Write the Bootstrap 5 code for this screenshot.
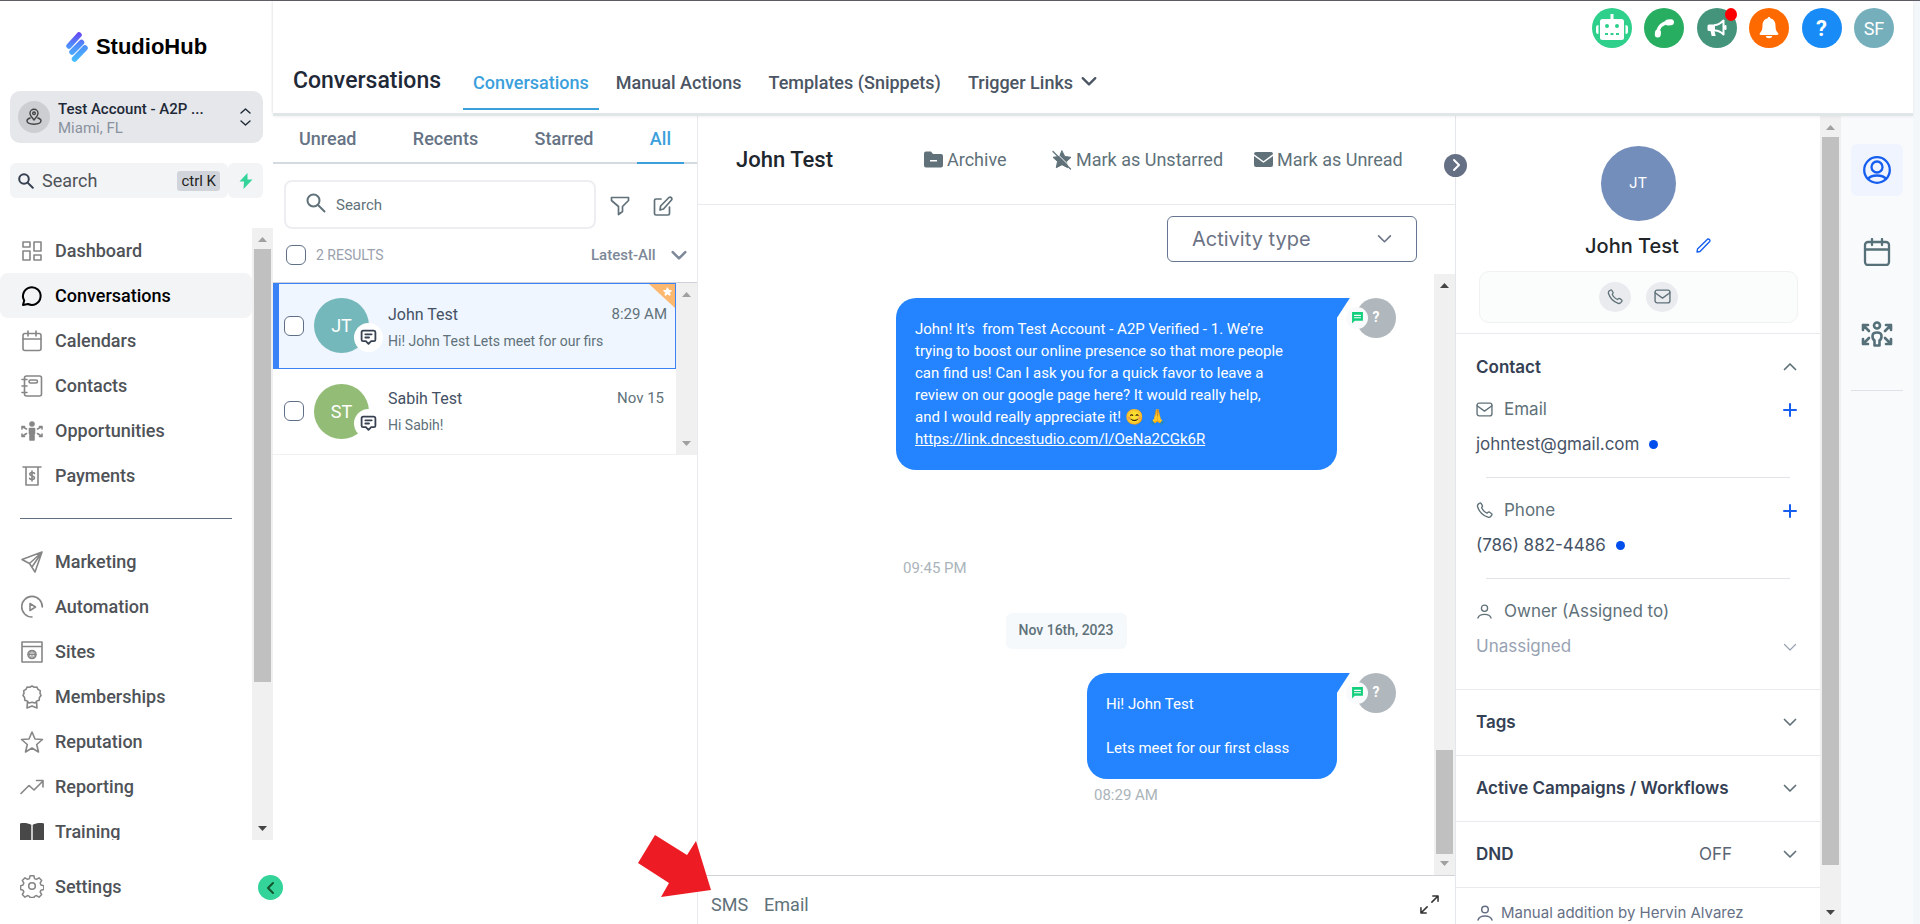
<!DOCTYPE html>
<html lang="en">
<head>
<meta charset="utf-8">
<meta name="viewport" content="width=device-width, initial-scale=1">
<title>StudioHub - Conversations</title>
<link href="https://cdn.jsdelivr.net/npm/bootstrap@5.3.0/dist/css/bootstrap.min.css" rel="stylesheet">
<style>
  body { font-family: Roboto, "Liberation Sans", sans-serif; font-size: 16px; color: #607179; background: #fff; overflow: hidden; stroke-width: 2; }
  svg { display: block; flex: none; fill: none; stroke: currentColor; stroke-linecap: round; stroke-linejoin: round; }
  svg.solid { fill: currentColor; stroke: none; }
  a { color: inherit; text-decoration: none; }
  button { font: inherit; color: inherit; border: 0; background: none; padding: 0; }
  select, input { font: inherit; color: inherit; border: 0; background: none; outline: 0; min-width: 0; }
  select { appearance: none; }
  input::placeholder { color: inherit; opacity: 1; }
  .app-shell { border-top: 1px solid #5f5e66; }
  .t14 { font-size: 14px; } .t15 { font-size: 15px; } .t16 { font-size: 16px; } .t18 { font-size: 18px; }
  .font-inter { font-family: Inter, "Liberation Sans", sans-serif; }
  .disc { border-radius: 50%; display: flex; align-items: center; justify-content: center; flex: none; color: #fff; }

  /* drawn scrollbars */
  .scroller { width: 21px; flex: none; background: #f0f0f0; display: flex; flex-direction: column; align-items: center; color: #a0a0a0; }
  .scroller svg { width: 21px; height: 21px; fill: currentColor; stroke: none; }
  .scroller .dark { color: #454545; }
  .scroller .rail { flex: 1; width: 17px; display: flex; flex-direction: column; min-height: 0; }
  .scroller .thumb { background: #c0c0c0; }

  /* sidebar */
  .sidebar { width: 273px; flex: none; position: relative; color: #4f5358; }
  .brand { height: 90px; flex: none; color: #000; font: 700 22px "Liberation Sans", sans-serif; padding-top: 2px; }
  .account { height: 52px; border-radius: 10px; background: #e5e7eb; color: #1f2937; line-height: 19px; width: 253px; flex: none; }
  .account .disc { width: 32px; height: 32px; background: #cdced1; color: #444; }
  .quick-row { width: 253px; margin-top: 20px; flex: none; }
  .quick { height: 35px; border-radius: 6px; background: #f3f4f6; }
  .keycap { background: #d1d5db; border-radius: 3px; height: 20px; line-height: 20px; color: #222; font-size: 15px; }
  .side-link { height: 45px; padding-left: 20px; gap: 11px; font-size: 18px; font-weight: 500; flex: none; }
  .side-link svg { width: 24px; height: 24px; color: #868686; stroke-width: 1.6; }
  .side-link.current { background: #f3f4f6; color: #000; border-radius: 8px; }
  .side-link.current svg { color: #000; stroke-width: 2; }
  .side-rule { height: 1px; background: #607080; margin: 20px; flex: none; }
  .side-foot { height: 84px; flex: none; }
  .fold { position: absolute; right: -10px; bottom: 24px; width: 25px; height: 25px; background: #34d399; color: #14532d; z-index: 5; }

  /* header */
  .topbar { height: 112px; background: #fff; box-shadow: 0 3px 0 #e0e5e8, 0 4px 3px rgba(0,0,0,.06), -1px 0 2px rgba(0,0,0,.08); position: relative; z-index: 2; }
  .topbar h1 { font-size: 23px; font-weight: 500; color: #1f2937; padding: 0 0 18px 20px; width: 190px; line-height: 28px; }
  .top-tabs { gap: 7px; padding-bottom: 3px; }
  .top-tab { padding: 3px 10px 0; height: 44px; font-size: 18px; font-weight: 500; color: #4b5563; }
  .top-tab.current { color: #3b9fdc; border-bottom: 2px solid #3b9fdc; }
  .actions { width: 302px; top: 7px; right: 19px; }
  .actions .disc { width: 40px; height: 40px; position: relative; }
  .alert-dot { position: absolute; width: 12px; height: 13px; border-radius: 50%; background: #f00; top: 0; right: 0; }
  .stage { margin-top: 3px; }
  .window-edge { background: #f3f7fa; padding-right: 7px; }

  /* conversation list */
  .threads { width: 425px; flex: none; border-right: 1px solid #e8eaee; }
  .filters { height: 48px; border-bottom: 2px solid #d5dae0; padding: 0 13px; }
  .filters a { padding: 0 13px; font-size: 18px; font-weight: 500; color: #667385; margin-bottom: -2px; height: 48px; padding-top: 10px; line-height: 26px; }
  .filters a.current { color: #3b9fdc; border-bottom: 2px solid #3b9fdc; }
  .thread-search { height: 49px; border: 2px solid #eceef2; border-radius: 8px; width: 312px; padding: 2px 0 0 20px; gap: 10px; }
  .results { height: 54px; border-bottom: 1px solid #cfd3d9; padding: 0 10px 0 13px; }
  .tick { appearance: none; width: 20px; height: 20px; border: 1px solid #5f6f86; border-radius: 6px; background: #fff; margin: 0; flex: none; }
  .thread { height: 86px; padding-left: 11px; position: relative; }
  .thread.current { background: #eff6ff; border: 1px solid #3b82f6; border-left-width: 6px; padding-left: 5px; }
  .thread .face { width: 55px; height: 55px; margin: 0 19px 0 10px; font-size: 18px; position: relative; }
  .thread .via { position: absolute; width: 29px; height: 29px; right: -14px; bottom: 1px; background: #fff; color: #374151; }
  .thread .corner { position: absolute; right: 0; top: 0; width: 26px; height: 24px; }
  .peek { white-space: nowrap; font-size: 14px; }

  /* chat */
  .chat-head { height: 89px; border-bottom: 1px solid #e8eaee; padding-left: 38px; position: relative; }
  .chat-head h2 { font-size: 22px; font-weight: 500; color: #20262e; width: 188px; }
  .chat-head button { gap: 4px; font-size: 18px; }
  .next { position: absolute; right: -12px; top: 38px; width: 23px; height: 23px; background: #667085; z-index: 3; }
  .activity { width: 250px; height: 46px; border: 1px solid #667590; border-radius: 6px; font-size: 20px; color: #6b7385; }
  .stream { padding: 24px 38px 0 0; overflow: hidden; }
  .bubble { background: #2484ff; color: #fff; border-radius: 20px 0 20px 20px; padding: 20px 19px; line-height: 22px; font-size: 15px; position: relative; }
  .bubble::after { content: ""; position: absolute; left: 100%; top: 0; width: 13px; height: 20px; background: inherit; clip-path: polygon(0 0, 100% 0, 0 100%); }
  .bubble-wide { width: 441px; } .bubble-slim { width: 250px; }
  .sender { width: 40px; height: 40px; background: #b0b8bd; margin-left: 19px; font-size: 14px; font-weight: 700; position: relative; }
  .sender .via { position: absolute; left: -10px; width: 22px; height: 22px; background: #f8fafc; color: #12cf7d; }
  .stamp { line-height: 20px; padding-left: 7px; color: #aab4ba; font-size: 15px; }
  .day { height: 36px; border-radius: 6px; background: #f5f9fc; font-size: 14px; font-weight: 500; padding: 0 13px; }
  .composer { height: 49px; border-top: 1px solid #d0d4d9; padding: 9px 16px 0 13px; font-size: 18px; }
  .pointer-arrow { position: absolute; left: -61px; bottom: 26px; z-index: 4; }

  /* contact panel */
  .contact { width: 386px; flex: none; }
  .contact-body { overflow: hidden; border-left: 1px solid #e3e6ea; }
  .contact-body > section { border-bottom: 1px solid #e8eaed; }
  .portrait { width: 75px; height: 75px; background: #748ebc; font-size: 15px; }
  .full-name { height: 30px; margin-top: 10px; gap: 17px; padding-left: 20px; }
  .reach { height: 52px; border: 1px solid #f0f2f2; border-radius: 10px; background: #fbfdfd; gap: 15px; margin: 10px 22px 0 23px; }
  .reach .disc { width: 32px; height: 30px; background: #eaebef; color: #5f7179; }
  .line26 { height: 26px; }
  .fact { padding: 0 23px 0 20px; font-size: 17px; }
  .fact h3 { font-size: 17px; font-weight: 600; color: #344054; }
  .fact hr { margin: 19px 7px 20px 10px; border: 0; border-top: 1px solid #e0e3e7; opacity: 1; }
  .dot { width: 9px; height: 9px; border-radius: 50%; background: #004eeb; }
  .fold-row { height: 66px; }
  .tool-rail { width: 72px; flex: none; background: #f9fafc; color: #56707a; padding: 28px 10px; gap: 30px; }
  .tool { width: 52px; height: 52px; border-radius: 6px; display: flex; align-items: center; justify-content: center; }
  .tool.current { background: #eff4ff; color: #155eef; }
</style>
</head>
<body>
<svg width="0" height="0" class="position-absolute" aria-hidden="true">
  <symbol id="tri-up" viewBox="0 0 21 21"><path d="M6 14h9l-4.500-5z"/></symbol>
  <symbol id="tri-down" viewBox="0 0 21 21"><path d="M6 7h9l-4.500 5z"/></symbol>
  <symbol id="mag" viewBox="0 0 20 20"><circle cx="7.500" cy="7.500" r="6"/><path d="M12 12l6.500 6.500"/></symbol>
  <symbol id="down" viewBox="0 0 14 14"><path d="M1.500 4.500L7 10l5.500-5.500"/></symbol>
  <symbol id="mail" viewBox="0 0 16 16"><rect x="1" y="2" width="14" height="12" rx="2"/><path d="M1 4.500l7 5 7-5"/></symbol>
  <symbol id="phone" viewBox="0 0 16 16"><path d="M5.300 5.400c.5 1.100 1.200 2.100 2.100 3s1.900 1.600 3 2.100l.9-.8c.5-.4 1-.4 1.500-.1l1.700 1.200c.6.400.7 1 .3 1.500l-.8 1.100c-.7.9-1.700 1.300-2.800.9C6.500 12.700 3 9.200 1.500 4.500c-.3-1 0-2 .9-2.700l.9-.6c.6-.4 1.200-.3 1.600.3l1 1.600c.3.500.3 1-.1 1.500z"/></symbol>
  <symbol id="person" viewBox="0 0 16 16"><circle cx="8" cy="4.500" r="3.300"/><path d="M1 15c1-3 3.500-4 7-4s6 1 7 4"/></symbol>
  <symbol id="note" viewBox="0 0 16 16"><path d="M3 1.500h10q1.500 0 1.500 1.500v7q0 1.500-1.500 1.500h-2.500L8 14l-2.500-2.500H3Q1.500 11.500 1.500 10V3Q1.500 1.500 3 1.500zM5 5h6M5 8h3.500"/></symbol>
  <symbol id="msg" viewBox="0 0 12 12"><path fill="currentColor" stroke="none" d="M1 1h10v8H3.500L1 11.500z"/><path stroke="#fff" stroke-width="1" d="M3.200 4h5.600M3.200 6.200h5.600"/></symbol>
</svg>

<div class="app-shell d-flex vh-100">
  <aside class="sidebar d-flex flex-column">
    <div class="brand d-flex align-items-center justify-content-center gap-2">
      <svg width="22" height="32" viewBox="0 0 22 32">
        <defs><linearGradient id="lg" gradientUnits="userSpaceOnUse" x1="0" y1="0" x2="0" y2="32"><stop offset="0" stop-color="#6a3df0"/><stop offset=".45" stop-color="#4f8dfb"/><stop offset="1" stop-color="#45c3ff"/></linearGradient></defs>
        <path stroke="url(#lg)" stroke-width="5.500" d="M3 15L13 4M6 21L15.500 11.500M8.500 28L19 17"/>
      </svg>
      <span>StudioHub</span>
    </div>
    <button type="button" class="account d-flex align-items-center text-start mx-auto px-2">
      <span class="disc"><svg width="18" height="18" viewBox="0 0 18 18" stroke-width="1.400"><path d="M9 12C6.500 9 5 7.500 5 5.300a4 4 0 0 1 8 0C13 7.500 11.500 9 9 12z"/><circle cx="9" cy="5.300" r="1.300"/><path d="M5.200 10C3.500 10.500 2 11.300 2 12.800c0 2 3 3.400 7 3.400s7-1.400 7-3.400c0-1.500-1.500-2.300-3.200-2.800"/></svg></span>
      <span class="ms-2 pt-1 flex-fill"><span class="d-block t15 fw-medium">Test Account - A2P ...</span><span class="d-block t15" style="color:#8a929e">Miami, FL</span></span>
      <svg width="20" height="20" viewBox="0 0 20 20" stroke-width="1.400"><path d="M6 6l4.500-4L15 6M6 14l4.500 4 4.500-4"/></svg>
    </button>
    <div class="quick-row d-flex mx-auto">
      <label class="quick d-flex align-items-center flex-fill px-2">
        <svg width="16" height="16" viewBox="0 0 20 20" stroke-width="2.500" style="color:#374151"><use href="#mag"/></svg>
        <input type="text" class="t18 flex-fill ms-2 p-0" placeholder="Search" aria-label="Search" size="6">
        <span class="keycap px-1">ctrl K</span>
      </label>
      <button type="button" class="quick px-2" aria-label="Quick actions" style="width:35px"><svg class="solid mx-auto" width="14" height="16" viewBox="0 0 14 16" style="color:#34d399"><path d="M8.500 0L0.500 8.500h4.500L4.500 16 13.500 6.500H8.500z"/></svg></button>
    </div>
    <div class="d-flex flex-fill overflow-hidden" style="margin-top:30px">
      <nav class="d-flex flex-column flex-fill overflow-hidden">
        <a href="#" class="side-link d-flex align-items-center"><svg viewBox="0 0 24 24"><path d="M3 3h7v5H3zM14 3h7v9h-7zM3 12h7v9H3zM14 16h7v5h-7z"/></svg>Dashboard</a>
        <a href="#" class="side-link current d-flex align-items-center"><svg viewBox="0 0 24 24"><path d="M3 21l1.200-4.500A8.800 8.800 0 1 1 8 20z"/></svg>Conversations</a>
        <a href="#" class="side-link d-flex align-items-center"><svg viewBox="0 0 24 24"><rect x="3" y="4.500" width="18" height="17" rx="2"/><path d="M3 10h18M8 2v5M16 2v5"/></svg>Calendars</a>
        <a href="#" class="side-link d-flex align-items-center"><svg viewBox="0 0 24 24"><rect x="4.500" y="2" width="17" height="20" rx="2"/><rect x="9" y="6" width="8.500" height="3" rx="1.500"/><path d="M2 5.500h5M2 12h5M2 18.500h5"/></svg>Contacts</a>
        <a href="#" class="side-link d-flex align-items-center"><svg viewBox="0 0 24 24"><circle cx="12" cy="5" r="2" fill="currentColor"/><path fill="currentColor" d="M9.500 9.500h5v5H14V21h-4v-6.500h-.5z"/><path d="M6.500 10L2 7.500M2 10V7.500h2.500M6.500 14.500L2 17.500M2 15v2.500h2.500M17.500 10L22 7.500M22 10V7.500h-2.500M17.500 14.500l4.500 3M22 15v2.500h-2.500"/></svg>Opportunities</a>
        <a href="#" class="side-link d-flex align-items-center"><svg viewBox="0 0 24 24"><path d="M3 3h18M6 3v18h12V3M14.500 9.500C14 8.200 9.800 8 9.800 10.200c0 2.300 4.700 1.300 4.700 3.600 0 2.200-4.400 2.200-4.900.4M12 7v10"/></svg>Payments</a>
        <div class="side-rule"></div>
        <a href="#" class="side-link d-flex align-items-center"><svg viewBox="0 0 24 24"><path d="M22 2L2 9.500l7.500 4L15 22zM22 2L9.500 13.500M22 2L12 17"/></svg>Marketing</a>
        <a href="#" class="side-link d-flex align-items-center"><svg viewBox="0 0 24 24"><path d="M12 22A10.300 10.300 0 1 1 22.300 12M10 8.500l5.500 3.500-5.500 3.500z"/></svg>Automation</a>
        <a href="#" class="side-link d-flex align-items-center"><svg viewBox="0 0 24 24"><path d="M2 2h20v20H2zM2 6.500h20"/><circle cx="12" cy="14.500" r="4"/><path stroke-width="1.100" d="M8 14.500h8M12 10.500v8M10.500 11c-1 2-1 5 0 7M13.500 11c1 2 1 5 0 7"/></svg>Sites</a>
        <a href="#" class="side-link d-flex align-items-center"><svg viewBox="0 0 24 24"><path d="M12 1l2.300 1.200 2.600-.2 1.100 2.300 2.200 1.400L20 8.300l1 2.300-1.600 2-.2 2.600-2.400.9L15 18l-3-.8L9 18l-1.800-1.900-2.400-.9-.2-2.600L3 10.600l1-2.300-.2-2.600L6 4.300 7.100 2l2.600.2zM7.500 16.500L7 23l5-2 5 2-.5-6.500"/></svg>Memberships</a>
        <a href="#" class="side-link d-flex align-items-center"><svg viewBox="0 0 24 24"><path d="M12 2l3 7 7.500.5-5.800 5L18.500 22 12 18l-6.500 4 1.800-7.500-5.800-5L9 9z"/></svg>Reputation</a>
        <a href="#" class="side-link d-flex align-items-center"><svg viewBox="0 0 24 24"><path d="M1 18.500l8-8 5 4.500 9-9M16.500 5.500H23V12"/></svg>Reporting</a>
        <a href="#" class="side-link d-flex align-items-center"><svg class="solid" viewBox="0 0 24 24" style="color:#484848"><path d="M0 3.500c4-.8 8-.3 11.300 1.200v17C8 20.300 4 20 0 20.800zM24 3.500c-4-.8-8-.3-11.300 1.200v17c3.300-1.400 7.300-1.700 11.300-.9z"/></svg>Training</a>
      </nav>
      <div class="scroller"><svg><use href="#tri-up"/></svg><div class="rail"><div class="thumb" style="height:76%"></div></div><svg class="dark"><use href="#tri-down"/></svg></div>
    </div>
    <div class="side-foot d-flex align-items-center">
      <a href="#" class="side-link d-flex align-items-center mt-2"><svg viewBox="0 0 24 24"><circle cx="12" cy="12" r="3.300"/><path d="M10 1.500h4l.7 3 2 .9 2.700-1.700 2.800 2.800-1.600 2.700.8 2 3 .8v4l-3 .8-.8 1.700 1.600 2.800-2.800 2.800-2.700-1.700-2 .8-.7 1.300h-4l-.7-1.300-2-.8-2.700 1.700-2.800-2.800 1.600-2.800-.8-1.700-2.600-.8v-4l2.600-.8.8-2-1.600-2.700 2.800-2.800 2.700 1.700 2-.9z" transform="translate(.6 .3) scale(.95)"/></svg>Settings</a>
    </div>
    <button type="button" class="fold disc" aria-label="Collapse menu"><svg width="14" height="14" viewBox="0 0 14 14"><path d="M9 2L4 7l5 5"/></svg></button>
  </aside>

  <div class="window-edge d-flex flex-column flex-fill" style="min-width:0">
    <header class="topbar d-flex align-items-end">
      <h1 class="mb-0">Conversations</h1>
      <nav class="top-tabs d-flex">
        <a href="#" class="top-tab current">Conversations</a>
        <a href="#" class="top-tab">Manual Actions</a>
        <a href="#" class="top-tab">Templates (Snippets)</a>
        <a href="#" class="top-tab d-flex gap-2">Trigger Links <svg class="mt-1" width="16" height="16" viewBox="0 0 14 14"><use href="#down"/></svg></a>
      </nav>
      <div class="actions position-absolute d-flex justify-content-between">
        <button type="button" class="disc" style="background:#2ed08b" aria-label="Assistant"><svg class="solid" width="34" height="30" viewBox="0 0 34 30"><path d="M15.500 1h3v5h8q2.500 0 2.500 2.500v16Q29 27 26.500 27h-19Q5 27 5 24.500v-16Q5 6 7.500 6h8zM3.500 12v9Q1 21 1 18.500v-4Q1 12 3.500 12zM30.500 12v9q2.500 0 2.500-2.500v-4q0-2.500-2.500-2.500z"/><g fill="#2ed08b"><circle cx="12" cy="13" r="2"/><circle cx="22" cy="13" r="2"/><path d="M10 20h3v2h-3zM15.500 20h3v2h-3zM21 20h3v2h-3z"/></g></svg></button>
        <button type="button" class="disc" style="background:#27ae60" aria-label="Call"><svg width="20" height="20" viewBox="0 0 20 20"><path stroke-width="3.500" stroke-linecap="butt" d="M3.500 16C4 9 8.500 4.500 16 4"/><path stroke-width="6" d="M14 4.500l3-.3M4 14.500l-.2 2"/></svg></button>
        <button type="button" class="disc" style="background:#44947c" aria-label="Announcements"><svg width="20" height="20" viewBox="0 0 20 20"><path fill="currentColor" stroke="none" d="M2 6.500h6V13H2q-1.500 0-1.500-1.500V8Q.5 6.500 2 6.500zM3.500 13h4l1.200 5h-4z"/><path d="M8 7c4 0 6-2 8.500-4.500v14C14 14 12 12.500 8 12.500M18.500 8v3"/></svg><span class="alert-dot"></span></button>
        <button type="button" class="disc" style="background:#ff6a00" aria-label="Notifications"><svg class="solid" width="20" height="24" viewBox="0 0 20 24"><path d="M8.700 2.200C8.700.5 11.300.5 11.300 2.200 15 3 16.500 6 16.500 9.500c0 4.500 1.200 6 2.500 7.500.8 1 .2 2-1 2H2c-1.200 0-1.800-1-1-2 1.300-1.500 2.500-3 2.500-7.500 0-3.500 1.500-6.500 5.200-7.300zM6.800 20h6.400c0 3-6.400 3-6.400 0z"/></svg></button>
        <button type="button" class="disc fw-bold" style="background:#188bf6;font-size:22px" aria-label="Help">?</button>
        <button type="button" class="disc t18" style="background:#75afbc">SF</button>
      </div>
    </header>

    <div class="stage d-flex flex-fill bg-white" style="min-height:0">
      <section class="threads">
        <nav class="filters d-flex justify-content-between">
          <a href="#">Unread</a><a href="#">Recents</a><a href="#">Starred</a><a href="#" class="current">All</a>
        </nav>
        <div class="d-flex align-items-center mt-3" style="margin-left:11px">
          <label class="thread-search d-flex align-items-center"><svg class="mb-1" width="20" height="20" viewBox="0 0 20 20"><use href="#mag"/></svg><input type="text" class="t15 p-0 flex-fill" placeholder="Search" aria-label="Search conversations"></label>
          <button type="button" class="pt-1" style="margin-left:14px" aria-label="Filter"><svg width="20" height="20" viewBox="0 0 20 20" stroke-width="1.700"><path d="M1.500 1.500h17v3l-6 6v5l-4 3v-8l-7-6z"/></svg></button>
          <button type="button" class="pt-1" style="margin-left:23px" aria-label="New message"><svg width="20" height="20" viewBox="0 0 20 20" stroke-width="1.700"><path d="M8 3H3Q1.500 3 1.500 4.500v13Q1.500 19 3 19h12q1.500 0 1.500-1.500V11"/><path d="M7 14l.6-4L16 1.500q1.300-.8 2.300.2t.2 2.300L10.500 13z"/></svg></button>
        </div>
        <div class="results d-flex align-items-center">
          <input type="checkbox" class="tick" id="all"><label for="all" class="t14 flex-fill" style="color:#9aa1ad;margin-left:10px">2 RESULTS</label>
          <select class="fw-medium t15 p-0" style="width:76px;color:#7d8898" aria-label="Sort"><option>Latest-All</option></select><svg class="ms-1" width="16" height="16" viewBox="0 0 14 14" stroke-width="2.200" style="color:#7d8898"><use href="#down"/></svg>
        </div>
        <div class="d-flex">
          <div class="flex-fill">
            <article class="thread current d-flex align-items-center">
              <input type="checkbox" class="tick" aria-label="Select John Test">
              <div class="disc face" style="background:#75b8bb">JT<span class="via disc"><svg width="17" height="17" viewBox="0 0 16 16" stroke-width="1.700"><use href="#note"/></svg></span></div>
              <div class="flex-fill pt-1">
                <div class="d-flex t16 mb-1"><span class="flex-fill" style="color:#445064">John Test</span><span class="t15 me-2">8:29 AM</span></div>
                <div class="peek">Hi! John Test Lets meet for our firs</div>
              </div>
              <svg class="corner" viewBox="0 0 26 24"><path fill="#fdb870" stroke="none" d="M0 0h26v24z"/><path fill="#fff" stroke="#fff" stroke-width="1" d="M18.500 4l1.300 2.300 2.700.4-1.900 1.900.5 2.700-2.600-1.200-2.500 1.200.5-2.700-2-1.900 2.700-.4z"/></svg>
            </article>
            <article class="thread d-flex align-items-center" style="border-bottom:1px solid #f0f1f3">
              <input type="checkbox" class="tick" aria-label="Select Sabih Test">
              <div class="disc face" style="background:#93bd77">ST<span class="via disc"><svg width="17" height="17" viewBox="0 0 16 16" stroke-width="1.700"><use href="#note"/></svg></span></div>
              <div class="flex-fill">
                <div class="d-flex t16 mb-1"><span class="flex-fill" style="color:#445064">Sabih Test</span><span class="t15 me-2 pe-1">Nov 15</span></div>
                <div class="peek">Hi Sabih!</div>
              </div>
            </article>
          </div>
          <div class="scroller"><svg><use href="#tri-up"/></svg><div class="rail"></div><svg><use href="#tri-down"/></svg></div>
        </div>
      </section>

      <main class="flex-fill d-flex flex-column position-relative" style="min-width:0">
        <div class="chat-head d-flex align-items-center">
          <h2 class="mb-0">John Test</h2>
          <button type="button" class="d-flex align-items-center" style="width:128px"><svg class="solid" width="19" height="17" viewBox="0 0 19 17"><path d="M2 .5h5l2 2.500h8q2 0 2 2v9.500q0 2-2 2H2q-2 0-2-2v-12Q0 .5 2 .5z"/><path fill="#fff" d="M6 9h7v1.500H6z"/></svg>Archive</button>
          <button type="button" class="d-flex align-items-center" style="width:202px"><svg class="solid" width="20" height="20" viewBox="0 0 20 20"><path stroke="currentColor" stroke-width="1" d="M10 1l2.800 5.500 6.200.8-4.500 4.200 1.200 6.200-5.700-3-5.700 3 1.200-6.200L1 7.300l6.200-.8z"/><path d="M2.500 1l17 17" stroke="#fff" stroke-width="1"/><path d="M1 1.500l17.500 17.500" stroke="currentColor" stroke-width="1.300"/></svg>Mark as Unstarred</button>
          <button type="button" class="d-flex align-items-center"><svg class="solid" width="19" height="15" viewBox="0 0 19 15"><rect width="19" height="15" rx="2"/><path d="M0 3l9.500 7L19 3" fill="none" stroke="#fff" stroke-width="1.500"/></svg>Mark as Unread</button>
          <button type="button" class="next disc" aria-label="Hide details"><svg width="14" height="14" viewBox="0 0 14 14"><path d="M5 2l5 5-5 5"/></svg></button>
        </div>
        <div class="d-flex justify-content-end" style="padding:11px 38px 12px">
          <div class="activity font-inter d-flex align-items-center pe-4">
            <select class="flex-fill p-0 ps-4 h-100" aria-label="Activity type"><option>Activity type</option></select>
            <svg width="15" height="15" viewBox="0 0 14 14" stroke-width="1.500"><use href="#down"/></svg>
          </div>
        </div>
        <div class="d-flex flex-fill" style="min-height:0">
          <div class="stream flex-fill">
            <div class="d-flex justify-content-end">
              <div>
                <div class="bubble bubble-wide">John! It's&nbsp; from Test Account - A2P Verified - 1. We’re<br>trying to boost our online presence so that more people<br>can find us! Can I ask you for a quick favor to leave a<br>review on our google page here? It would really help,<br>and I would really appreciate it! 😊 🙏<br><a href="#" class="text-decoration-underline">https://link.dncestudio.com/l/OeNa2CGk6R</a></div>
                <div class="stamp" style="margin-top:88px">09:45 PM</div>
              </div>
              <div class="sender disc">?<span class="via disc"><svg width="13" height="13" viewBox="0 0 12 12"><use href="#msg"/></svg></span></div>
            </div>
            <div class="d-flex justify-content-center" style="margin:35px -38px 24px 0"><div class="day d-flex align-items-center">Nov 16th, 2023</div></div>
            <div class="d-flex justify-content-end">
              <div>
                <div class="bubble bubble-slim">Hi! John Test<br><br>Lets meet for our first class</div>
                <div class="stamp" style="margin-top:6px">08:29 AM</div>
              </div>
              <div class="sender disc">?<span class="via disc"><svg width="13" height="13" viewBox="0 0 12 12"><use href="#msg"/></svg></span></div>
            </div>
          </div>
          <div class="scroller"><svg class="dark"><use href="#tri-up"/></svg><div class="rail justify-content-end"><div class="thumb" style="height:18.600%"></div></div><svg><use href="#tri-down"/></svg></div>
        </div>
        <div class="composer d-flex align-items-center">
          <button type="button">SMS</button><button type="button" class="ms-3">Email</button>
          <button type="button" class="ms-auto" aria-label="Expand"><svg width="19" height="19" viewBox="0 0 20 20" stroke-width="1.600" style="color:#333"><path d="M12.500 7.500L19 1M13.500 1H19v5.500M7.500 12.500L1 19M6.500 19H1v-5.500"/></svg></button>
        </div>
        <svg class="pointer-arrow solid" width="75" height="64" viewBox="0 0 75 64" style="color:#ed1c24"><path d="M18 1L50 21 59 7 74 56 24 63 32 49 1 29z"/></svg>
      </main>

      <aside class="contact d-flex">
        <div class="contact-body flex-fill font-inter d-flex flex-column">
          <section style="padding:30px 0 10px">
            <div class="disc portrait mx-auto">JT</div>
            <div class="full-name d-flex align-items-center justify-content-center"><h2 class="mb-0 fw-medium text-dark" style="font-size:20px">John Test</h2><button type="button" aria-label="Edit name"><svg width="15" height="15" viewBox="0 0 15 15" stroke-width="1.400" style="color:#155eef"><path d="M1 14l.5-3L11.500 1.200q1-.6 1.900.3t.3 1.900L4 13.500z"/></svg></button></div>
            <div class="reach d-flex align-items-center justify-content-center">
              <button type="button" class="disc" aria-label="Call contact"><svg width="16" height="16" viewBox="0 0 16 16" stroke-width="1.300"><use href="#phone"/></svg></button>
              <button type="button" class="disc" aria-label="Email contact"><svg width="17" height="17" viewBox="0 0 16 16" stroke-width="1.300"><use href="#mail"/></svg></button>
            </div>
          </section>
          <section class="fact" style="padding-top:20px;padding-bottom:29px">
            <div class="d-flex align-items-center justify-content-between line26"><h3 class="mb-0">Contact</h3><svg width="14" height="14" viewBox="0 0 14 14" stroke-width="1.700"><path d="M1.500 9.500L7 4l5.500 5.500"/></svg></div>
            <div class="d-flex align-items-center line26" style="margin-top:17px"><svg width="17" height="17" viewBox="0 0 16 16" stroke-width="1.300"><use href="#mail"/></svg><span class="flex-fill" style="margin-left:11px">Email</span><button type="button" aria-label="Add email"><svg width="14" height="14" viewBox="0 0 14 14" style="color:#155eef"><path d="M7 1v12M1 7h12"/></svg></button></div>
            <div class="d-flex align-items-center line26" style="margin-top:9px;gap:10px;color:#475467">johntest@gmail.com<span class="dot"></span></div>
            <hr>
            <div class="d-flex align-items-center line26"><svg width="17" height="17" viewBox="0 0 16 16" stroke-width="1.300"><use href="#phone"/></svg><span class="flex-fill" style="margin-left:11px">Phone</span><button type="button" aria-label="Add phone"><svg width="14" height="14" viewBox="0 0 14 14" style="color:#155eef"><path d="M7 1v12M1 7h12"/></svg></button></div>
            <div class="d-flex align-items-center line26" style="margin-top:9px;gap:10px;color:#475467">(786) 882-4486<span class="dot"></span></div>
            <hr>
            <div class="d-flex align-items-center line26"><svg width="17" height="15" viewBox="0 0 16 16" stroke-width="1.400"><use href="#person"/></svg><label for="owner" style="margin-left:11px">Owner (Assigned to)</label></div>
            <div class="d-flex align-items-center line26" style="margin-top:9px;color:#98a2b3"><select id="owner" class="flex-fill p-0"><option>Unassigned</option></select><svg width="14" height="14" viewBox="0 0 14 14" stroke-width="1.200"><use href="#down"/></svg></div>
          </section>
          <section class="fact fold-row d-flex align-items-center justify-content-between flex-shrink-0"><h3 class="mb-0">Tags</h3><svg width="14" height="14" viewBox="0 0 14 14" stroke-width="1.700"><use href="#down"/></svg></section>
          <section class="fact fold-row d-flex align-items-center justify-content-between flex-shrink-0"><h3 class="mb-0">Active Campaigns / Workflows</h3><svg width="14" height="14" viewBox="0 0 14 14" stroke-width="1.700"><use href="#down"/></svg></section>
          <section class="fact fold-row d-flex align-items-center flex-shrink-0"><h3 class="mb-0 flex-fill">DND</h3><span style="width:84px;color:#5a6474">OFF</span><svg width="14" height="14" viewBox="0 0 14 14" stroke-width="1.700"><use href="#down"/></svg></section>
          <div class="d-flex align-items-center t15 flex-shrink-0" style="padding:12px 0 0 21px;height:38px;gap:8px;color:#667085"><svg width="16" height="16" viewBox="0 0 16 16" stroke-width="1.500"><use href="#person"/></svg>Manual addition by Hervin Alvarez</div>
        </div>
        <div class="scroller"><svg><use href="#tri-up"/></svg><div class="rail"><div class="thumb" style="height:95%"></div></div><svg class="dark"><use href="#tri-down"/></svg></div>
      </aside>

      <nav class="tool-rail d-flex flex-column">
        <a href="#" class="tool current" aria-label="Contact details"><svg width="28" height="28" viewBox="0 0 28 28" stroke-width="2.300"><circle cx="14" cy="14" r="12.800"/><circle cx="14" cy="11" r="5.500"/><path d="M5 23c2-3 5-3.500 9-3.500s7 .5 9 3.500"/></svg></a>
        <a href="#" class="tool" aria-label="Appointments"><svg width="28" height="28" viewBox="0 0 28 28" stroke-width="2.300"><rect x="2" y="4" width="24" height="23" rx="3"/><path d="M2 11.500h24M9 1v6M19 1v6"/></svg></a>
        <a href="#" class="tool" aria-label="Opportunities"><svg width="32" height="26" viewBox="0 0 32 26" stroke-width="2.600"><circle cx="16" cy="4.500" r="3"/><path d="M13.500 24.500v-5q-2-1-2-4.500t4.500-3.500 4.500 3.500-2 4.500v5zM8 10L2 4M2 9V4h5M8 17l-6 6M2 18v5h5M24 10l6-6M30 9V4h-5M24 17l6 6M30 18v5h-5"/></svg></a>
        <div class="border-top"></div>
      </nav>
    </div>
  </div>
</div>
<script src="https://cdn.jsdelivr.net/npm/bootstrap@5.3.0/dist/js/bootstrap.bundle.min.js"></script>
</body>
</html>
